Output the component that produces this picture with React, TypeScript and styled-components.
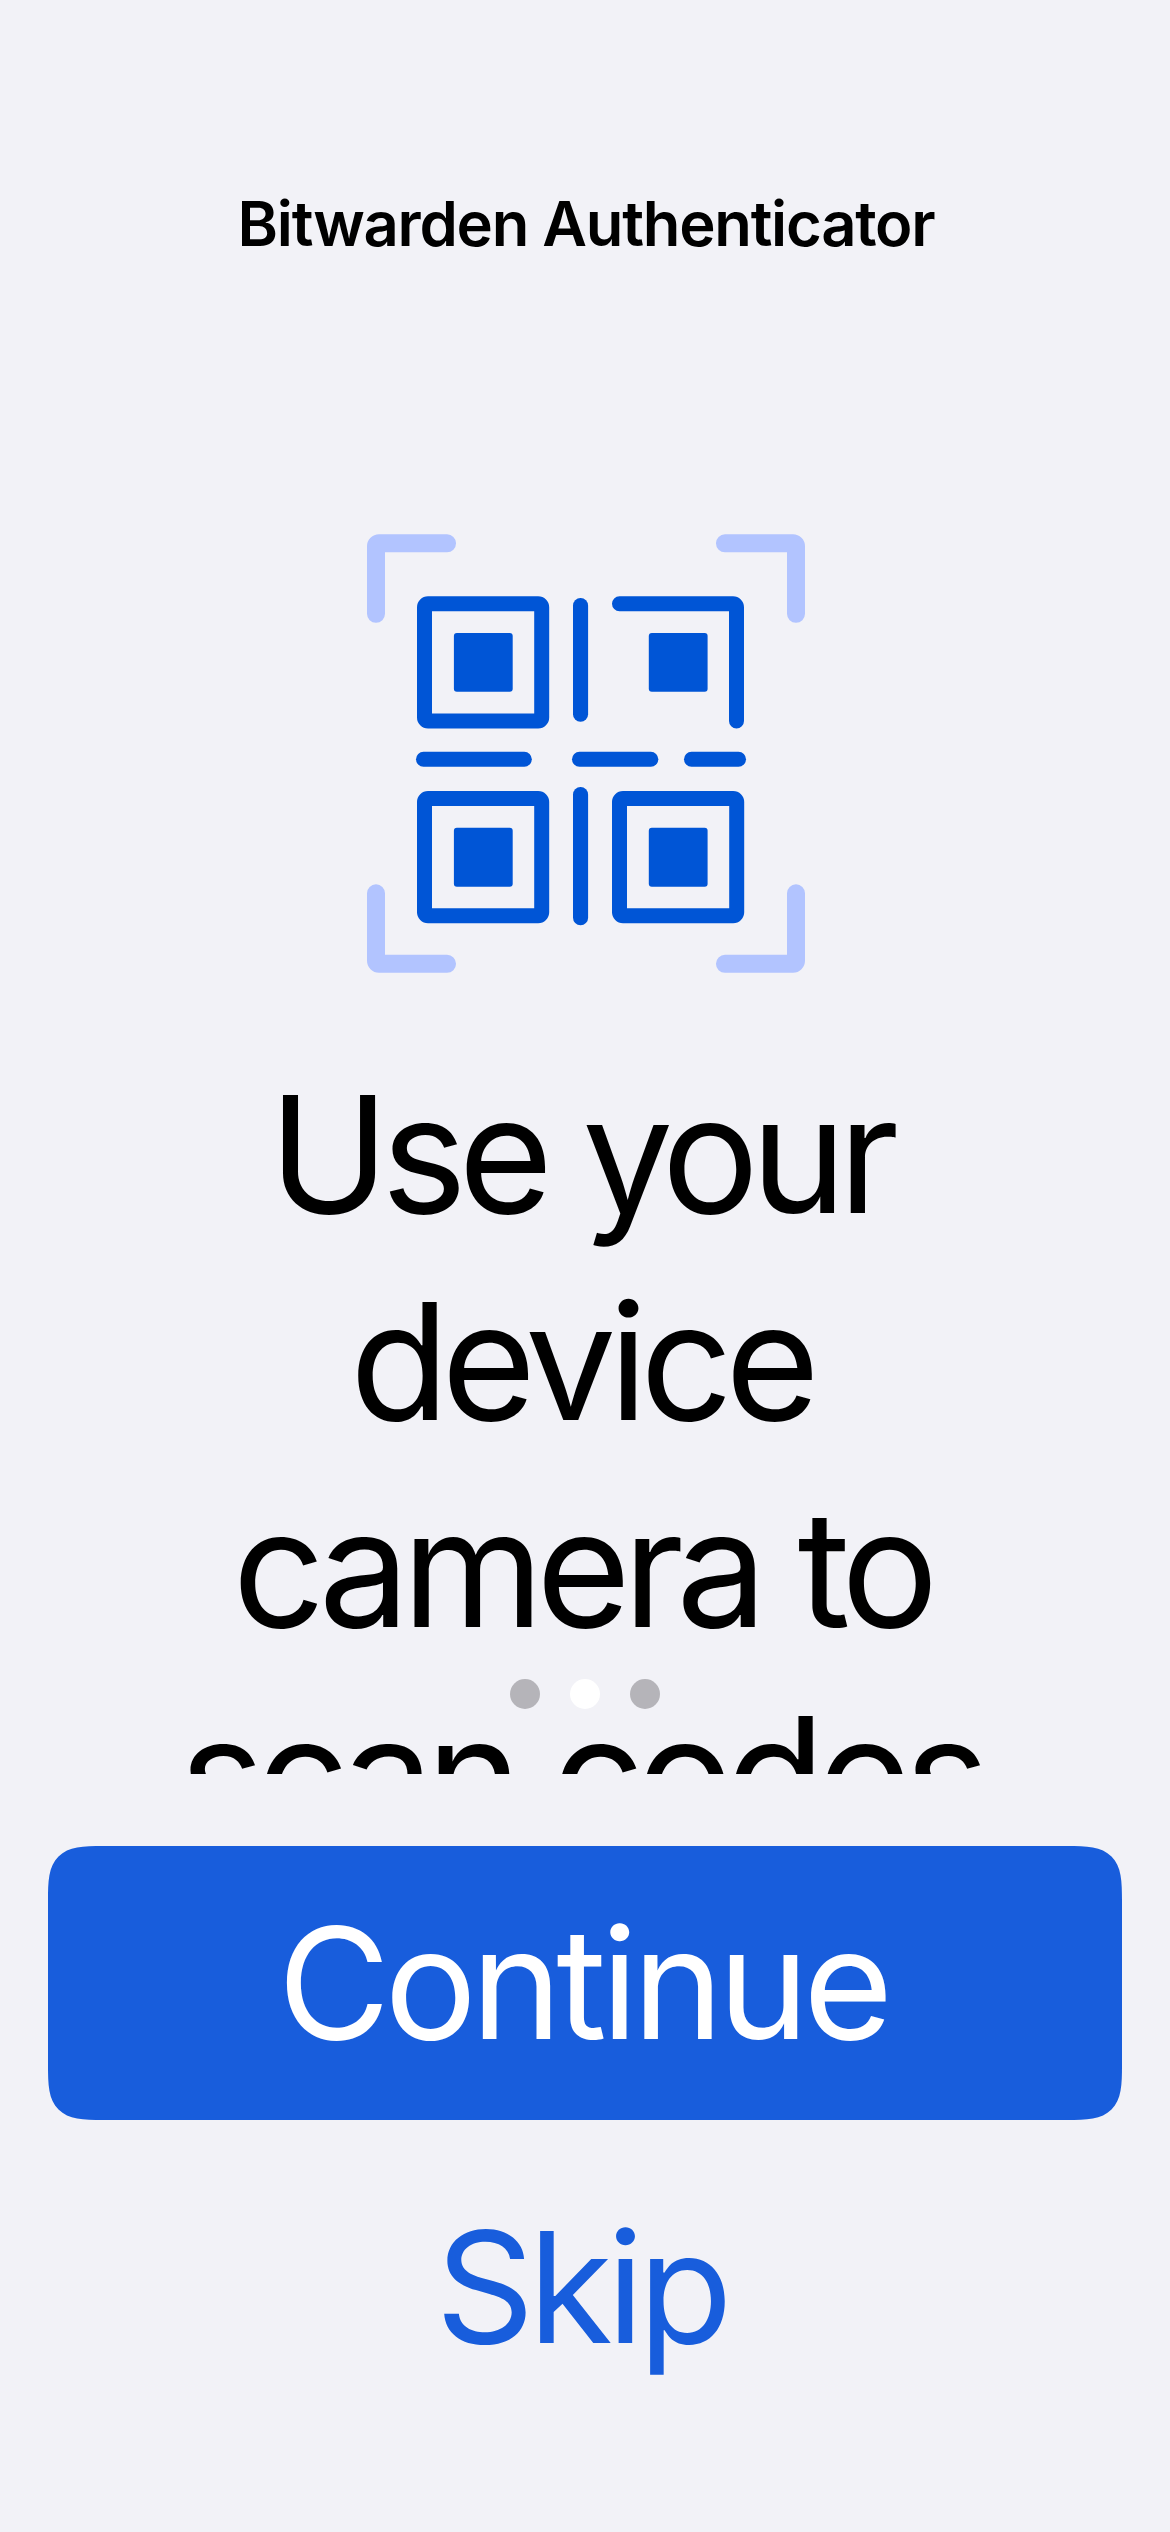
import React from "react";
import styled, { createGlobalStyle } from "styled-components";

const GlobalStyle = createGlobalStyle`
  * { box-sizing: border-box; }
  body { margin: 0; background: #f2f2f7; }
`;

const Screen = styled.div`
  width: 1170px;
  height: 2532px;
  display: flex;
  flex-direction: column;
  overflow: hidden;
  background: #f2f2f7;
  color: #000;
  font-family: Inter, "Liberation Sans", sans-serif;
`;

const NavBar = styled.header`
  flex: none;
  height: 313px;
  padding-top: 174px;
  text-align: center;
`;

const NavTitle = styled.h1`
  margin: 0;
  font-size: 61.5px;
  line-height: 100px;
  font-weight: 600;
  letter-spacing: -1.25px;
  text-indent: 2px;
  white-space: nowrap;
`;

const Carousel = styled.main`
  position: relative;
  flex: none;
  height: 1461px;
  padding-top: 221px;
  display: flex;
  flex-direction: column;
  align-items: center;
  overflow: hidden;
`;

const Illustration = styled.svg`
  flex: none;
  width: 438px;
  height: 440px;
  margin-left: 2px;
`;

const Heading = styled.h2`
  margin: 77px 0 0;
  display: flex;
  flex-direction: column;
  align-items: center;
  font-size: 162px;
  line-height: 207px;
  font-weight: 430;
  font-variation-settings: "opsz" 32;
`;

const HeadingLine = styled.span<{ $tracking: number; $shift?: number }>`
  white-space: nowrap;
  letter-spacing: ${(p) => p.$tracking}px;
  margin-left: ${(p) => p.$shift ?? 0}px;
`;

const PageDots = styled.div`
  position: absolute;
  left: 0;
  right: 0;
  bottom: 65px;
  display: flex;
  justify-content: center;
  gap: 30px;
`;

const Dot = styled.span<{ $active?: boolean }>`
  width: 30px;
  height: 30px;
  border-radius: 50%;
  background: ${(p) => (p.$active ? "#ffffff" : "#b5b4b9")};
`;

const Actions = styled.footer`
  flex: 1;
  display: flex;
  flex-direction: column;
  gap: 30px;
  padding: 72px 48px 0;
`;

const Button = styled.button<{ $primary?: boolean }>`
  flex: none;
  height: 274px;
  padding: 0;
  border: 0;
  border-radius: 36px;
  background: ${(p) => (p.$primary ? "#185ddc" : "transparent")};
  color: ${(p) => (p.$primary ? "#ffffff" : "#185ddc")};
  font-family: inherit;
  font-size: 154px;
  line-height: 274px;
  font-weight: 430;
  letter-spacing: ${(p) => (p.$primary ? -5.7 : -6)}px;
  text-indent: ${(p) => (p.$primary ? -5 : -8)}px;

  @supports (corner-shape: squircle) {
    border-radius: 55px;
    corner-shape: superellipse(1.71);
  }
`;

const FRAME_CORNER =
  "M0 12a12 12 0 0 1 12-12H80a9 9 0 0 1 0 18.1H18V79.6a9 9 0 0 1-18 0Z";

const Finder = ({ x, y }: { x: number; y: number }) => (
  <rect
    x={x + 7.5}
    y={y + 7.5}
    width={117.2}
    height={117.2}
    rx={3.5}
    fill="none"
    stroke="#0055d6"
    strokeWidth={15}
  />
);

const Core = ({ x, y }: { x: number; y: number }) => (
  <rect x={x} y={y} width={58.8} height={58.8} rx={3} />
);

const QrScanArt = () => (
  <Illustration viewBox="0 0 438 440" aria-hidden="true">
    <g transform="translate(0 .25)">
      <g fill="#b2c4ff">
        <path d={FRAME_CORNER} />
        <path d={FRAME_CORNER} transform="translate(438 0) scale(-1 1)" />
        <path d={FRAME_CORNER} transform="translate(0 438.6) scale(1 -1)" />
        <path d={FRAME_CORNER} transform="translate(438 438.6) scale(-1 -1)" />
      </g>
      <g fill="#0055d6">
        <Finder x={50} y={62} />
        <Finder x={50} y={256.8} />
        <Finder x={245} y={256.8} />
        <Core x={86.9} y={98.7} />
        <Core x={281.8} y={98.7} />
        <Core x={86.9} y={293.6} />
        <Core x={281.8} y={293.6} />
        <path d="M252.5 62H366a11 11 0 0 1 11 11V186.8a7.5 7.5 0 0 1-15 0V77H252.5a7.5 7.5 0 0 1 0-15Z" />
        <rect x={206} y={63.8} width={15.1} height={123.6} rx={7.5} />
        <rect x={206} y={252.8} width={15.1} height={138.2} rx={7.5} />
        <rect x={49} y={217.5} width={115.8} height={15} rx={7.5} />
        <rect x={205} y={217.5} width={86.3} height={15} rx={7.5} />
        <rect x={317} y={217.5} width={62} height={15} rx={7.5} />
      </g>
    </g>
  </Illustration>
);

export default function App() {
  return (
    <>
      <GlobalStyle />
      <Screen>
        <NavBar>
          <NavTitle>Bitwarden Authenticator</NavTitle>
        </NavBar>
        <Carousel>
          <QrScanArt />
          <Heading>
            <HeadingLine $tracking={-8.2} $shift={-10}>Use your</HeadingLine>
            <HeadingLine $tracking={-7.6} $shift={-8}>device</HeadingLine>
            <HeadingLine $tracking={-7.7} $shift={-7}>camera to</HeadingLine>
            <HeadingLine $tracking={-7.8} $shift={-9}>scan codes</HeadingLine>
          </Heading>
          <PageDots>
            <Dot />
            <Dot $active />
            <Dot />
          </PageDots>
        </Carousel>
        <Actions>
          <Button $primary>Continue</Button>
          <Button>Skip</Button>
        </Actions>
      </Screen>
    </>
  );
}
